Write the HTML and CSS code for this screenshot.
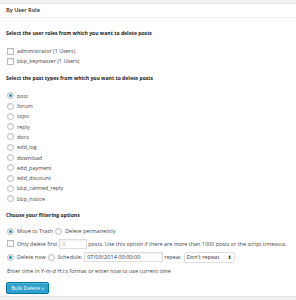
FILE: index.html
```html
<!DOCTYPE html>
<html lang="en">
<head>
  <meta charset="UTF-8">
  <title>Bulk Delete</title>
  <link rel="stylesheet" href="styles.css">
</head>
<body>
  <!-- By User Role box -->
  <div class="postbox">
    <h3 class="hndle">By User Role</h3>
    <div class="inside">
      <h4>Select the user roles from which you want to delete posts</h4>
      <div class="opt-list roles">
        <label class="opt"><input type="checkbox"> administrator (1 Users)</label>
        <label class="opt"><input type="checkbox"> bbp_keymaster (1 Users)</label>
      </div>

      <h4>Select the post types from which you want to delete posts</h4>
      <div class="opt-list types">
        <label class="opt"><input type="radio" name="type" checked> post</label>
        <label class="opt"><input type="radio" name="type"> forum</label>
        <label class="opt"><input type="radio" name="type"> topic</label>
        <label class="opt"><input type="radio" name="type"> reply</label>
        <label class="opt"><input type="radio" name="type"> docs</label>
        <label class="opt"><input type="radio" name="type"> edd_log</label>
        <label class="opt"><input type="radio" name="type"> download</label>
        <label class="opt"><input type="radio" name="type"> edd_payment</label>
        <label class="opt"><input type="radio" name="type"> edd_discount</label>
        <label class="opt"><input type="radio" name="type"> bbp_canned_reply</label>
        <label class="opt"><input type="radio" name="type"> bbp_notice</label>
      </div>

      <h4>Choose your filtering options</h4>
      <div class="filters">
        <div class="frow">
          <label class="opt"><input type="radio" name="del" checked> Move to Trash</label>
          <label class="opt"><input type="radio" name="del"> Delete permanently</label>
        </div>
        <div class="frow limit">
          <label class="opt"><input type="checkbox"> Only delete first</label>
          <span class="txt small">0</span>
          <span>posts. Use this option if there are more than 1000 posts or the script timesout.</span>
        </div>
        <div class="frow sched">
          <label class="opt"><input type="radio" name="when" checked> Delete now</label>
          <label class="opt"><input type="radio" name="when"> Schedule:</label>
          <span class="txt date">07/03/2014 00:00:00</span>
          <span>repeat</span>
          <span class="select">Don't repeat <span class="arrows">&#x2B0D;</span></span>
        </div>
        <p class="desc">Enter time in Y-m-d H:i:s format or enter now to use current time</p>
      </div>

      <button class="button-primary">Bulk Delete &raquo;</button>
    </div>
  </div>
</body>
</html>
```

FILE: styles.css
```css
/* Global */
* {
  margin: 0;
  padding: 0;
  box-sizing: border-box;
}

body {
  background-color: #f1f1f1;
  color: #444;
  font-family: "Open Sans", "Liberation Sans", sans-serif;
  font-size: 5.45px;
  padding-top: 3px;
}

/* Box */
.postbox {
  background-color: #fff;
  border-top: 1px solid #e5e5e5;
  border-bottom: 1px solid #e5e5e5;
  height: 294px;
}

.hndle {
  font-size: 5.6px;
  font-weight: 600;
  color: #222;
  height: 14px;
  line-height: 12px;
  padding: 0 6px;
  border-bottom: 1px solid #eee;
}

.inside {
  padding: 9px 6px 0;
}

h4 {
  font-size: 5.1px;
  font-weight: 700;
  color: #222;
  line-height: 12px;
}

/* Option lists */
.opt-list {
  display: flex;
  flex-direction: column;
  padding: 7px 0 5px 1px;
}

.opt-list .opt {
  height: 10.3px;
}

.opt {
  display: flex;
  align-items: center;
  gap: 3px;
  white-space: nowrap;
}

input[type="checkbox"],
input[type="radio"] {
  appearance: none;
  width: 7px;
  height: 7px;
  margin: 0;
  border: 1px solid #b4b9be;
  background: #fff;
  box-shadow: inset 0 1px 1px rgba(0, 0, 0, 0.08);
  flex-shrink: 0;
}

input[type="radio"] {
  border-radius: 50%;
  display: grid;
  place-items: center;
}

input[type="radio"]:checked::before {
  content: "";
  width: 3px;
  height: 3px;
  border-radius: 50%;
  background: #1e8cbe;
}

/* Filtering options */
.filters {
  padding: 4px 0 0 1px;
}

.frow {
  display: flex;
  align-items: center;
  gap: 1px;
  white-space: nowrap;
  height: 13px;
}

.frow.limit {
  height: 12px;
}

.frow.sched {
  height: 15px;
}

.frow .opt + .opt {
  margin-left: 1px;
}

.txt {
  display: inline-block;
  border: 1px solid #ddd;
  box-shadow: inset 0 1px 2px rgba(0, 0, 0, 0.07);
  height: 10px;
  line-height: 8px;
  padding: 0 2px;
  color: #333;
}

.txt.small {
  width: 28px;
  color: #999;
  margin-left: 1px;
}

.txt.date {
  width: 79px;
  margin-left: 1px;
  font-size: 5.6px;
}

.select {
  display: inline-flex;
  justify-content: space-between;
  align-items: center;
  width: 51px;
  height: 11px;
  padding: 0 2px;
  margin-left: 2px;
  border: 1px solid #ddd;
  border-radius: 2px;
  color: #333;
  font-size: 5.6px;
}

.arrows {
  font-family: "DejaVu Sans", sans-serif;
  font-size: 5px;
}

.desc {
  line-height: 12px;
}

/* Button */
.button-primary {
  margin-top: 5px;
  font-family: inherit;
  font-size: 5.4px;
  color: #fff;
  background: #2ea2cc;
  border: 1px solid #0074a2;
  border-radius: 2px;
  box-shadow: inset 0 1px 0 rgba(120, 200, 230, 0.5);
  width: 43px;
  height: 12px;
  padding: 0;
}
```
